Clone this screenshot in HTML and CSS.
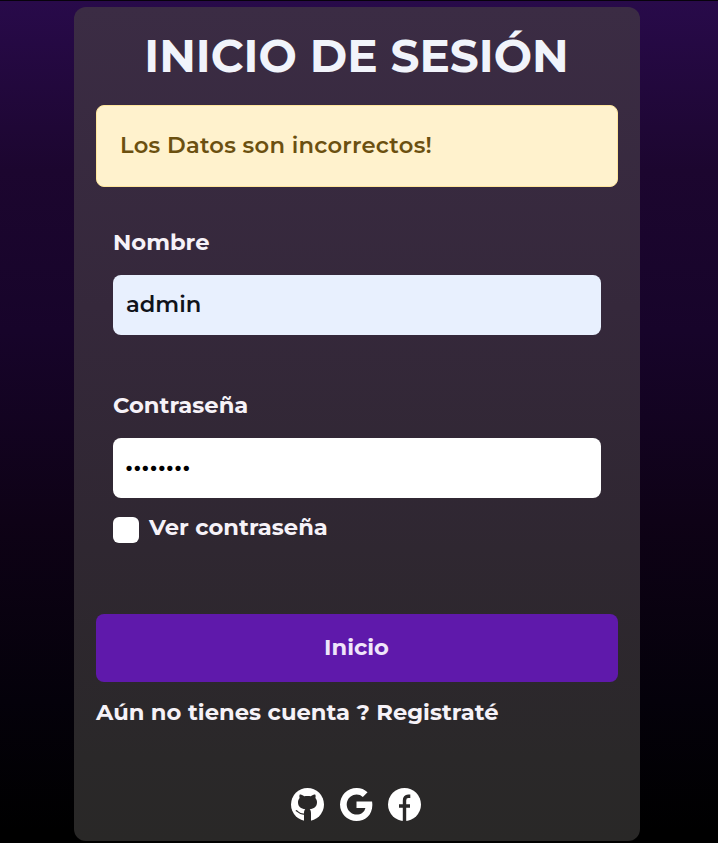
FILE: index.html
```html
<!DOCTYPE html>
<html lang="es">
<head>
<meta charset="utf-8">
<title>Inicio de sesión</title>
<link rel="stylesheet" href="styles.css">
</head>
<body>
<main class="card">
  <h1 class="title"><span>INICIO DE SESIÓN</span></h1>
  <div class="alert"><span>Los Datos son incorrectos!</span></div>
  <form class="form">
    <div class="fields">
      <label class="label label-name" for="name"><span>Nombre</span></label>
      <input class="input input-filled" id="name" type="text" value="admin">
      <label class="label label-pass" for="pass"><span>Contraseña</span></label>
      <input class="input input-pass" id="pass" type="password" value="password">
      <label class="check"><input class="box" type="checkbox"><span>Ver contraseña</span></label>
    </div>
    <button class="button" type="button"><span>Inicio</span></button>
  </form>
  <p class="register"><span>Aún no tienes cuenta ? Registraté</span></p>
  <div class="social">
    <svg viewBox="0 0 33 33">
      <mask id="cat">
        <rect width="33" height="33" fill="#fff"/>
        <path d="M13 33V25.5C13 23.3 13.4 22 14.3 21.2C10 20.7 7 18.8 7 14.2C7 12.4 7.6 11 8.6 9.9C8.2 8.6 8.3 7.3 8.8 6.6C10.2 6.6 11.8 7.3 13.2 8.3C15.3 7.8 17.7 7.8 19.8 8.3C21.2 7.3 22.8 6.6 24.2 6.6C24.7 7.3 24.8 8.6 24.4 9.9C25.4 11 26 12.4 26 14.2C26 18.8 23 20.7 18.7 21.2C19.6 22 20 23.3 20 25.5V33Z" fill="#000"/>
        <path d="M4.8 22.6C7.2 22.6 7.5 26.8 13.5 26" fill="none" stroke="#000" stroke-width="1.1"/>
      </mask>
      <circle cx="16.5" cy="16.5" r="16.5" mask="url(#cat)"/>
    </svg>
    <svg viewBox="0 0 16 16"><path d="M15.545 6.558a9.4 9.4 0 0 1 .139 1.626c0 2.434-.87 4.492-2.384 5.885h.002C11.978 15.292 10.158 16 8 16A8 8 0 1 1 8 0a7.7 7.7 0 0 1 5.352 2.082l-2.284 2.284A4.35 4.35 0 0 0 8 3.166c-2.087 0-3.86 1.408-4.492 3.304a4.8 4.8 0 0 0 0 3.063h.003c.635 1.893 2.405 3.301 4.492 3.301 1.078 0 2.004-.276 2.722-.764h-.003a3.7 3.7 0 0 0 1.599-2.431H8v-3.08z"/></svg>
    <svg viewBox="0 0 33 33">
      <mask id="face">
        <rect width="33" height="33" fill="#fff"/>
        <path d="M22.3 8.3H20.2Q16.5 8.3 16.5 12.4V33M11 18H22" fill="none" stroke="#000" stroke-width="3.4"/>
      </mask>
      <circle cx="16.5" cy="16.5" r="16.5" mask="url(#face)"/>
    </svg>
  </div>
</main>
</body>
</html>
```
FILE: styles.css
```css
* { box-sizing: border-box; }
html { background: #000; }
body {
  margin: 0;
  height: 843px;
  padding: 6px 78px 2px 74px;
  overflow: hidden;
  border-top: 1px solid #07020c;
  background: linear-gradient(#280a4a 0, #1c062f 170px, #17042a 330px, #0e0216 520px, #04010a 700px, #000 830px);
  font: 700 22.65px/34px Montserrat, Inter, "Liberation Sans", sans-serif;
  letter-spacing: .03px;
  color: #f6f2f8;
}
.card {
  height: 834px;
  padding: 20px 22px 0;
  border-radius: 12px;
  background: linear-gradient(#3b2c44, #35283b 36%, #2f2731 65%, #2a2829 90%, #292827);
}
.title {
  margin: 0;
  height: 78px;
  padding-right: 1px;
  font-size: 45.4px;
  letter-spacing: 0;
  line-height: 58px;
  text-align: center;
  color: #f1f4fb;
  white-space: nowrap;
}
.alert {
  height: 82px;
  padding: 22px 23px;
  border: 1px solid #ffe69c;
  border-radius: 8px;
  background: #fff2cd;
  color: #6b5010;
  font-weight: 600;
  letter-spacing: .25px;
}
.form { margin: 0; }
.fields {
  display: flex;
  flex-direction: column;
  height: 427px;
  padding: 38px 17px 0;
}
.label { height: 50px; }
.label-pass { margin-top: 53px; }
.input {
  width: 100%;
  height: 60px;
  padding: 0 13px 3px;
  border: 0;
  border-radius: 8px;
  background: #fff;
  color: #10131a;
  font: inherit;
  font-weight: 600;
}
.input-filled { background: #e8f0fe; }
.input-pass {
  padding: 0 12px 4px;
  font-size: 24.3px;
  color: #000;
}
.check {
  display: flex;
  gap: 10px;
  margin-top: 12px;
}
.box {
  appearance: none;
  width: 26px;
  height: 26px;
  margin: 7px 0 0;
  border-radius: 6px;
  background: #fff;
}
.button {
  display: block;
  width: 100%;
  height: 68px;
  padding: 0 1px 3px 0;
  border: 0;
  border-radius: 8px;
  background: #5f19ab;
  color: #efe5fa;
  font: inherit;
}
.register { margin: 13px 0 0; white-space: nowrap; }
.social {
  display: flex;
  justify-content: center;
  gap: 15.5px;
  margin: 59px 2px 0 0;
}
.social svg { width: 33px; height: 33px; fill: #fff; }
```
